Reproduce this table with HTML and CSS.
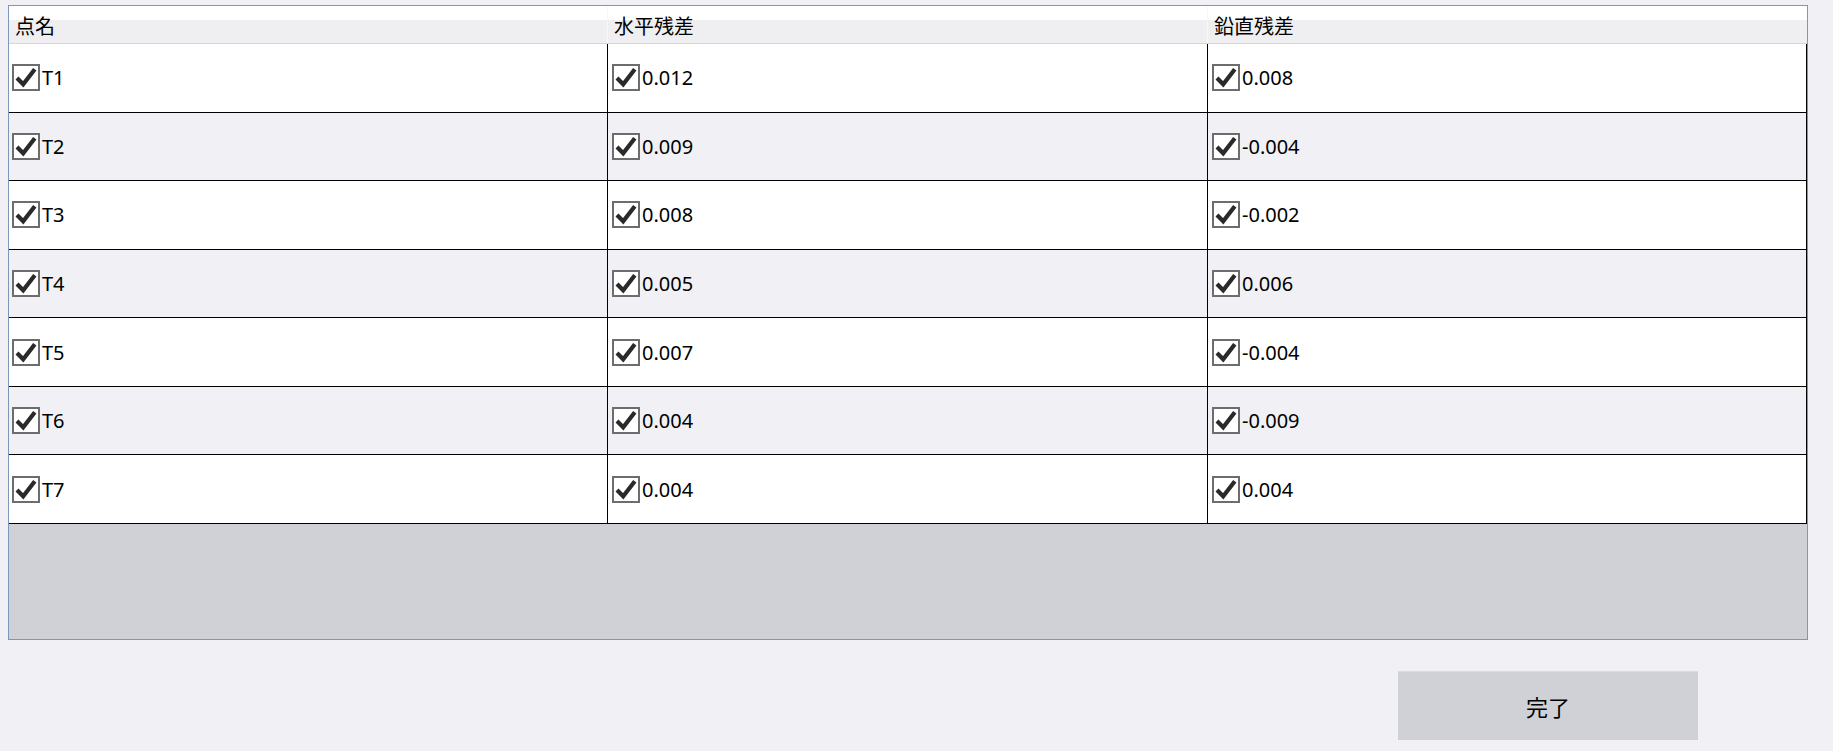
FILE: index.html
```html
<!DOCTYPE html>
<html lang="ja">
<head>
<meta charset="utf-8">
<link rel="stylesheet" href="styles.css">
</head>
<body>
<svg class="defs" width="0" height="0" aria-hidden="true">
  <symbol id="chk" viewBox="0 0 28 27">
    <rect x="1" y="1" width="26" height="25" fill="#fff" stroke="#6d6d6d" stroke-width="2"/>
    <path d="M5 14 L11.2 20.3 L22.8 5.2" fill="none" stroke="#2a2a2a" stroke-width="4.2" stroke-linejoin="miter"/>
  </symbol>
</svg>
<div class="page">
  <div class="frame">
    <div class="head">
      <div class="hcell">点名</div>
      <div class="hcell">水平残差</div>
      <div class="hcell last">鉛直残差</div>
    </div>
    <div class="rows">
      <div class="row">
        <div class="cell"><svg class="cb"><use href="#chk"/></svg><span>T1</span></div>
        <div class="cell"><svg class="cb"><use href="#chk"/></svg><span>0.012</span></div>
        <div class="cell"><svg class="cb"><use href="#chk"/></svg><span>0.008</span></div>
      </div>
      <div class="row alt">
        <div class="cell"><svg class="cb"><use href="#chk"/></svg><span>T2</span></div>
        <div class="cell"><svg class="cb"><use href="#chk"/></svg><span>0.009</span></div>
        <div class="cell"><svg class="cb"><use href="#chk"/></svg><span>-0.004</span></div>
      </div>
      <div class="row">
        <div class="cell"><svg class="cb"><use href="#chk"/></svg><span>T3</span></div>
        <div class="cell"><svg class="cb"><use href="#chk"/></svg><span>0.008</span></div>
        <div class="cell"><svg class="cb"><use href="#chk"/></svg><span>-0.002</span></div>
      </div>
      <div class="row alt">
        <div class="cell"><svg class="cb"><use href="#chk"/></svg><span>T4</span></div>
        <div class="cell"><svg class="cb"><use href="#chk"/></svg><span>0.005</span></div>
        <div class="cell"><svg class="cb"><use href="#chk"/></svg><span>0.006</span></div>
      </div>
      <div class="row">
        <div class="cell"><svg class="cb"><use href="#chk"/></svg><span>T5</span></div>
        <div class="cell"><svg class="cb"><use href="#chk"/></svg><span>0.007</span></div>
        <div class="cell"><svg class="cb"><use href="#chk"/></svg><span>-0.004</span></div>
      </div>
      <div class="row alt">
        <div class="cell"><svg class="cb"><use href="#chk"/></svg><span>T6</span></div>
        <div class="cell"><svg class="cb"><use href="#chk"/></svg><span>0.004</span></div>
        <div class="cell"><svg class="cb"><use href="#chk"/></svg><span>-0.009</span></div>
      </div>
      <div class="row">
        <div class="cell"><svg class="cb"><use href="#chk"/></svg><span>T7</span></div>
        <div class="cell"><svg class="cb"><use href="#chk"/></svg><span>0.004</span></div>
        <div class="cell"><svg class="cb"><use href="#chk"/></svg><span>0.004</span></div>
      </div>
    </div>
    <div class="empty"></div>
  </div>
  <div class="actions">
    <button class="done">完了</button>
  </div>
</div>
</body>
</html>
```

FILE: styles.css
```css
html, body {
  margin: 0;
  padding: 0;
  background: #f1f1f5;
  font-family: "Noto Sans", "Noto Sans CJK JP", sans-serif;
  color: #000;
}
.defs {
  position: absolute;
  width: 0;
  height: 0;
  overflow: hidden;
}
.page {
  width: 1833px;
  height: 751px;
  box-sizing: border-box;
  padding: 5px 0 0 8px;
  display: flex;
  flex-direction: column;
}
.frame {
  width: 1800px;
  height: 635px;
  box-sizing: border-box;
  border: 1px solid #7b97ba;
  display: flex;
  flex-direction: column;
  background: #fff;
}
.head {
  height: 38px;
  box-sizing: border-box;
  display: grid;
  grid-template-columns: 599px 600px 1fr;
  border-bottom: 1px solid #d6d6d9;
  background: linear-gradient(#ffffff 0, #ffffff 14px, #efeff2 14px, #efeff2 100%);
}
.hcell {
  display: flex;
  align-items: center;
  padding-left: 6px;
  font-family: "Noto Sans CJK JP", sans-serif;
  font-size: 20px;
  border-right: 1px solid #f8f8fa;
  padding-top: 2px;
}
.hcell.last {
  border-right: none;
}
.rows {
  display: flex;
  flex-direction: column;
}
.row {
  height: 68.57px;
  box-sizing: border-box;
  display: grid;
  grid-template-columns: 599px 600px 599px;
  border-bottom: 1px solid #000;
  background: #fff;
}
.row.alt {
  background: #f1f1f5;
}
.cell {
  display: flex;
  align-items: center;
  gap: 2px;
  padding-left: 3px;
  border-right: 1px solid #000;
  font-size: 20px;
}
.cell + .cell {
  padding-left: 4px;
}
.cb {
  width: 28px;
  height: 27px;
  flex: none;
}
.row.alt .cb rect {
  fill: #f1f1f5;
}
.empty {
  flex: 1;
  background: #d0d1d6;
}
.actions {
  display: flex;
  justify-content: flex-end;
  padding-right: 135px;
  margin-top: 31px;
}
.done {
  width: 300px;
  height: 69px;
  border: none;
  border-top: 1px solid #dcdce0;
  background: #d0d1d6;
  font-family: "Noto Sans CJK JP", sans-serif;
  font-size: 22px;
  color: #000;
  padding: 0;
}
```
